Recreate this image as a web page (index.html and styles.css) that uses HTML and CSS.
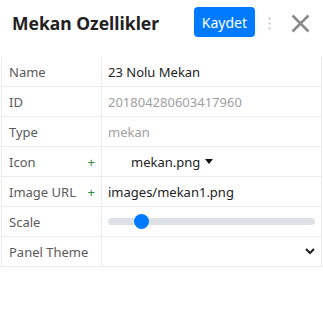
FILE: index.html
```html
<!DOCTYPE html>
<html>
  <head>
    <meta charset="UTF-8">
    <title>Mekan Ozellikler</title>
    <link rel="stylesheet" href="styles.css">
  </head>
  <body>
    <header class="panel-header">
      <h2>Mekan Ozellikler</h2>
      <button class="button" type="button">Kaydet</button>
      <svg class="dots" width="3" height="13" viewBox="0 0 3 13">
        <circle cx="1.5" cy="1.5" r="1.3" fill="#d2d2d2"/>
        <circle cx="1.5" cy="6.5" r="1.3" fill="#d2d2d2"/>
        <circle cx="1.5" cy="11.5" r="1.3" fill="#d2d2d2"/>
      </svg>
      <span class="close">
        <svg width="19" height="19" viewBox="0 0 19 19">
          <path d="M1.5 1.5 L17.5 17.5 M17.5 1.5 L1.5 17.5" stroke="#8a8a8a" stroke-width="2.6"/>
        </svg>
      </span>
    </header>

    <table class="props">
      <tr>
        <td class="label">Name</td>
        <td class="value">23 Nolu Mekan</td>
      </tr>
      <tr>
        <td class="label">ID</td>
        <td class="value muted">201804280603417960</td>
      </tr>
      <tr>
        <td class="label">Type</td>
        <td class="value muted">mekan</td>
      </tr>
      <tr>
        <td class="label">Icon <span class="plus">+</span></td>
        <td class="value">
          <span class="dropdown">mekan.png <span class="caret"></span></span>
        </td>
      </tr>
      <tr>
        <td class="label">Image URL <span class="plus">+</span></td>
        <td class="value">images/mekan1.png</td>
      </tr>
      <tr>
        <td class="label">Scale</td>
        <td class="value">
          <div class="slider">
            <div class="thumb"></div>
          </div>
        </td>
      </tr>
      <tr>
        <td class="label">Panel Theme</td>
        <td class="value">
          <div class="select">
            <svg width="10" height="7" viewBox="0 0 10 7">
              <path d="M1 1 L5 5 L9 1" fill="none" stroke="#222" stroke-width="2.2"/>
            </svg>
          </div>
        </td>
      </tr>
    </table>
  </body>
</html>
```

FILE: styles.css
```css
body {
  font-family: 'Noto Sans', 'Open Sans', sans-serif;
  margin: 0;
  padding: 0;
  background-color: #fff;
  color: #222;
}
.panel-header {
  display: flex;
  align-items: center;
  height: 46px;
  padding: 0 13px 0 12px;
  margin-bottom: 11px;
}
.panel-header h2 {
  margin: 0;
  font-size: 17.5px;
  font-weight: 700;
  color: #222;
  flex: 1;
}
.button {
  background-color: #007bff;
  border: none;
  color: #fff;
  font-family: inherit;
  font-size: 14px;
  height: 30px;
  padding: 0 8px;
  border-radius: 4px;
  margin-top: -2px;
}
.dots {
  margin-left: 13px;
  margin-right: 20px;
}
.close {
  display: flex;
}
.props {
  border-collapse: collapse;
  width: 321px;
  margin-left: 1px;
  font-size: 13px;
}
.props td {
  height: 29px;
  padding: 0;
  border: 1px solid #ebebeb;
  vertical-align: middle;
}
.props tr:first-child td {
  border-top: none;
}
.label {
  width: 92px;
  padding-left: 7px !important;
  color: #5a5a5a;
  position: relative;
}
.value {
  padding-left: 6px !important;
  padding-right: 6px !important;
  color: #222;
}
.muted {
  color: #a0a0a0;
}
.plus {
  color: #2e8b3a;
  position: absolute;
  right: 6px;
  top: 6px;
}
.dropdown {
  display: inline-flex;
  align-items: center;
  margin-left: 23px;
}
.caret {
  display: inline-block;
  width: 0;
  height: 0;
  margin-left: 5px;
  border-left: 4px solid transparent;
  border-right: 4px solid transparent;
  border-top: 5px solid #111;
}
.slider {
  position: relative;
  height: 7px;
  border-radius: 4px;
  background-color: #dee2e6;
}
.thumb {
  position: absolute;
  left: 26px;
  top: -4px;
  width: 15px;
  height: 15px;
  border-radius: 50%;
  background-color: #007bff;
}
.select {
  display: flex;
  justify-content: flex-end;
}
```
